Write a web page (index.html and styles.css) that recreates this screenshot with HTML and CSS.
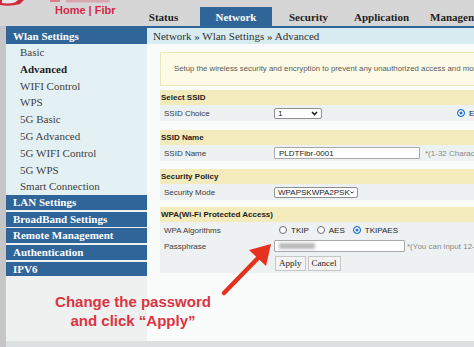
FILE: index.html
```html
<!DOCTYPE html>
<html>
<head>
<meta charset="utf-8">
<link rel="stylesheet" href="styles.css">
</head>
<body>
<header class="top">
  <div class="brand">
    <svg class="brand-art" width="127" height="26" viewBox="0 0 127 26">
      <path d="M0 0 H24 L20 4 Q10 7 0 5 Z" fill="#d2283c"/>
      <path d="M2 0 H18 L15 2.5 Q8 4 2 3 Z" fill="#e8e8e8"/>
      <rect x="50" y="0" width="10" height="2" fill="#e0405a" opacity="0.6"/>
      <rect x="66" y="0" width="44" height="2.5" fill="#e05068" opacity="0.35"/>
    </svg>
    <span class="brand-text">Home | Fibr</span>
  </div>
  <nav class="tabs">
    <span class="tab">Status</span>
    <span class="tab active">Network</span>
    <span class="tab">Security</span>
    <span class="tab">Application</span>
    <span class="tab last">Management</span>
  </nav>
</header>
<div class="frame">
  <aside class="side">
    <div class="grp first">Wlan Settings</div>
    <ul class="items">
      <li>Basic</li>
      <li class="cur">Advanced</li>
      <li>WIFI Control</li>
      <li>WPS</li>
      <li>5G Basic</li>
      <li>5G Advanced</li>
      <li>5G WIFI Control</li>
      <li>5G WPS</li>
      <li>Smart Connection</li>
    </ul>
    <div class="grp sub">LAN Settings</div>
    <div class="grp sub">BroadBand Settings</div>
    <div class="grp sub">Remote Management</div>
    <div class="grp sub">Authentication</div>
    <div class="grp sub">IPV6</div>
  </aside>
  <main class="content">
    <div class="crumb">Network » Wlan Settings » Advanced</div>
    <div class="panel">
      <div class="info">Setup the wireless security and encryption to prevent any unauthorized access and monitoring.</div>
      <section class="sec s1">
        <div class="sec-h">Select SSID</div>
        <div class="row">
          <span class="lbl">SSID Choice</span>
          <span class="val">
            <span class="sel w1"><span>1</span><svg width="7" height="5" viewBox="0 0 7 5"><path d="M1 1 L3.5 3.6 L6 1" fill="none" stroke="#222" stroke-width="1.5"/></svg></span>
            <span class="radio on far"></span><span class="rtxt">Enable</span>
          </span>
        </div>
      </section>
      <section class="sec s2">
        <div class="sec-h">SSID Name</div>
        <div class="row">
          <span class="lbl">SSID Name</span>
          <span class="val">
            <span class="inp w2">PLDTFibr-0001</span>
            <span class="hint">*(1-32 Characters)</span>
          </span>
        </div>
      </section>
      <section class="sec s3">
        <div class="sec-h">Security Policy</div>
        <div class="row">
          <span class="lbl">Security Mode</span>
          <span class="val">
            <span class="sel w3"><span>WPAPSKWPA2PSK</span><svg width="7" height="5" viewBox="0 0 7 5"><path d="M1 1 L3.5 3.6 L6 1" fill="none" stroke="#222" stroke-width="1.5"/></svg></span>
          </span>
        </div>
      </section>
      <section class="sec s4">
        <div class="sec-h">WPA(Wi-Fi Protected Access)</div>
        <div class="row">
          <span class="lbl">WPA Algorithms</span>
          <span class="val">
            <span class="radio first-r"></span><span class="rtxt">TKIP</span>
            <span class="radio"></span><span class="rtxt">AES</span>
            <span class="radio on"></span><span class="rtxt">TKIPAES</span>
          </span>
        </div>
        <div class="row">
          <span class="lbl">Passphrase</span>
          <span class="val">
            <span class="inp w4"><span class="blur"></span></span>
            <span class="hint tight">*(You can input 12-63 characters)</span>
          </span>
        </div>
        <div class="row btnrow">
          <span class="lbl"></span>
          <span class="val">
            <span class="btn">Apply</span>
            <span class="btn">Cancel</span>
          </span>
        </div>
      </section>
    </div>
  </main>
</div>
<div class="foot"></div>
<div class="note">Change the password<br>and click “Apply”</div>
<svg class="arrow" width="474" height="347" viewBox="0 0 474 347">
  <line x1="224" y1="293" x2="259" y2="257" stroke="#e5321f" stroke-width="4.5" stroke-linecap="round"/>
  <polygon points="271,244 266,266 249,250" fill="#e5321f"/>
</svg>
</body>
</html>
```
FILE: styles.css
```css
* { box-sizing: border-box; }
html, body { margin: 0; padding: 0; }
body {
  width: 474px;
  height: 347px;
  overflow: hidden;
  position: relative;
  background: #c6c6c6;
  font-family: "Liberation Sans", Arial, sans-serif;
}
.top {
  height: 26px;
  display: flex;
  align-items: flex-end;
  background: #d6d6d6;
}
.brand {
  width: 127px;
  height: 26px;
  display: grid;
}
.brand-art, .brand-text { grid-area: 1 / 1; }
.brand-text {
  margin: 4px 0 0 55px;
  font-weight: bold;
  font-size: 11px;
  line-height: 13px;
  color: #d3294a;
  align-self: start;
}
.tabs {
  display: flex;
  height: 19px;
}
.tab {
  flex: none;
  width: 73px;
  text-align: center;
  font-family: "Liberation Serif", "Times New Roman", serif;
  font-weight: bold;
  font-size: 11px;
  line-height: 20px;
  color: #1e1e1e;
  white-space: nowrap;
}
.tab.active {
  width: 72px;
  background: #2f6598;
  color: #fff;
}
.tab.last {
  text-align: left;
  padding-left: 12px;
}
.frame {
  margin-left: 6px;
  border-top: 2px solid #2f6598;
  height: 315px;
  display: grid;
  grid-template-columns: 141px 1fr;
  overflow: hidden;
}
.side {
  background: #eff1f1;
  font-family: "Liberation Serif", "Times New Roman", serif;
  font-size: 11px;
}
.grp {
  background: #2f6598;
  color: #fff;
  font-weight: bold;
  padding-left: 7px;
  white-space: nowrap;
}
.grp.first { height: 16px; line-height: 16px; }
.grp.sub { height: 14.8px; line-height: 15px; }
.grp.sub + .grp.sub { margin-top: 1.8px; }
.items {
  list-style: none;
  margin: 0;
  padding: 0;
  background: #e3f1f5;
}
.items li {
  height: 16.8px;
  line-height: 17px;
  padding-left: 14px;
  color: #3f3f3f;
}
.items li.cur { font-weight: bold; color: #222; }
.content {
  background: #fafbfb;
  overflow: hidden;
}
.crumb {
  height: 16px;
  line-height: 16px;
  background: #d7ebf0;
  padding-left: 6px;
  font-family: "Liberation Serif", "Times New Roman", serif;
  font-size: 11px;
  color: #333;
  white-space: nowrap;
}
.panel {
  margin: 8px 0 0 13px;
  width: 340px;
  font-size: 8px;
  color: #333;
}
.info {
  height: 34px;
  line-height: 32px;
  background: #fdfbe5;
  border: 1px solid #ede6bd;
  padding-left: 13px;
  font-size: 7.8px;
  color: #5a5a5a;
  white-space: nowrap;
  overflow: hidden;
}
.sec { background: #edf1f2; }
.s1 { margin-top: 4px; }
.s2 { margin-top: 9px; }
.s3 { margin-top: 8px; }
.s4 { margin-top: 7px; }
.sec-h {
  height: 15px;
  line-height: 15px;
  background: #f4ebbd;
  font-weight: bold;
  padding-left: 1px;
  color: #222;
}
.row {
  height: 16px;
  display: flex;
  align-items: center;
}
.row.btnrow { height: 19px; }
.lbl {
  flex: none;
  width: 114px;
  padding-left: 4px;
  color: #3a3a3a;
}
.val {
  display: flex;
  align-items: center;
  white-space: nowrap;
}
.sel {
  height: 11px;
  border: 1px solid #8e8e8e;
  border-radius: 2px;
  background: #fff;
  display: flex;
  align-items: center;
  justify-content: space-between;
  padding: 0 3px 0 3px;
  color: #222;
}
.sel.w1 { width: 48px; }
.sel.w3 { width: 84px; }
.inp {
  height: 12px;
  border: 1px solid #a8a8a8;
  border-radius: 1px;
  background: #fff;
  display: flex;
  align-items: center;
  padding-left: 4px;
  color: #222;
}
.inp.w2 { width: 146px; }
.inp.w4 { width: 131px; }
.blur {
  width: 36px;
  height: 6px;
  background: #b9b9b9;
  filter: blur(1.4px);
}
.hint { margin-left: 5px; color: #8a8a8a; }
.hint.tight { margin-left: 2px; }
.radio {
  width: 8px;
  height: 8px;
  border-radius: 50%;
  border: 1px solid #6d6d6d;
  background: #fff;
  margin-left: 8px;
  margin-right: 4px;
  flex: none;
}
.radio.first-r { margin-left: 5px; }
.radio.on {
  border-color: #1a6fd6;
  background: #1a6fd6;
  box-shadow: inset 0 0 0 1.5px #fff;
}
.radio.far { margin-left: 135px; }
.rtxt { color: #222; }
.btn {
  height: 15px;
  line-height: 13px;
  padding: 0 3px;
  margin-left: 1px;
  margin-right: 1px;
  border: 1px solid #c6c6c6;
  background: #f4f4f4;
  font-family: "Liberation Serif", "Times New Roman", serif;
  font-size: 9px;
  color: #222;
}
.foot {
  height: 6px;
  margin-left: 6px;
  background: #dde0e0;
}
.note {
  position: absolute;
  left: 36px;
  top: 292px;
  width: 194px;
  text-align: center;
  font-weight: bold;
  font-size: 15px;
  line-height: 19px;
  color: #dc3341;
}
.arrow {
  position: absolute;
  left: 0;
  top: 0;
  pointer-events: none;
}
```
